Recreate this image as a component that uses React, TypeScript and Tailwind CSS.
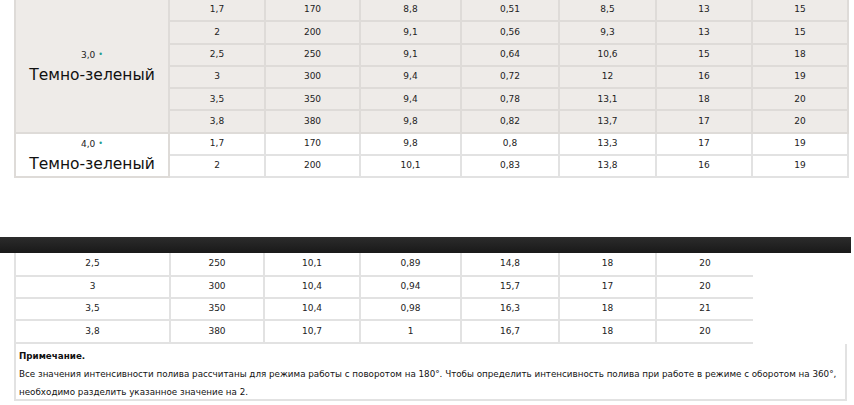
const font = { fontFamily: '"DejaVu Sans", Verdana, sans-serif' };

const topWidths = [154, 96, 95, 101, 98, 97, 96, 96];
const bottomWidths = [155, 94, 96, 101, 98, 97, 97];

const group30 = [
  ["1,7", "170", "8,8", "0,51", "8,5", "13", "15"],
  ["2", "200", "9,1", "0,56", "9,3", "13", "15"],
  ["2,5", "250", "9,1", "0,64", "10,6", "15", "18"],
  ["3", "300", "9,4", "0,72", "12", "16", "19"],
  ["3,5", "350", "9,4", "0,78", "13,1", "18", "20"],
  ["3,8", "380", "9,8", "0,82", "13,7", "17", "20"],
];

const group40 = [
  ["1,7", "170", "9,8", "0,8", "13,3", "17", "19"],
  ["2", "200", "10,1", "0,83", "13,8", "16", "19"],
];

const continued = [
  ["2,5", "250", "10,1", "0,89", "14,8", "18", "20"],
  ["3", "300", "10,4", "0,94", "15,7", "17", "20"],
  ["3,5", "350", "10,4", "0,98", "16,3", "18", "21"],
  ["3,8", "380", "10,7", "1", "16,7", "18", "20"],
];

function NameCell({ size, rows, bg }: { size: string; rows: number; bg: string }) {
  return (
    <td rowSpan={rows} className={`border-2 border-[#dedbd8] text-center align-middle ${bg}`}>
      <div className="text-[9px] leading-[18px] text-[#222]">
        {size} <span className="text-[#2a9d8f] text-[8px] align-top">•</span>
      </div>
      <div className="text-[15.5px] leading-[22px] text-[#111]">Темно-зеленый</div>
    </td>
  );
}

export default function App() {
  return (
    <div className="w-[854px] h-[405px] overflow-hidden bg-white" style={font}>
      {/* upper table, its first row is cut off by the window */}
      <div className="pl-[14px] pr-[7px] -mt-[2px]">
        <table className="border-collapse table-fixed w-[833px] text-[9px] text-[#222]">
          <colgroup>
            {topWidths.map((w, i) => (
              <col key={i} style={{ width: w }} />
            ))}
          </colgroup>
          <tbody>
            {group30.map((row, r) => (
              <tr key={r} className="h-[22.3px] bg-[#eeebe8]">
                {r === 0 && <NameCell size="3,0" rows={6} bg="bg-[#eeebe8]" />}
                {row.map((v, c) => (
                  <td key={c} className="border-2 border-[#dedbd8] text-center p-0">
                    {v}
                  </td>
                ))}
              </tr>
            ))}
            {group40.map((row, r) => (
              <tr key={r} className="h-[22.3px] bg-white">
                {r === 0 && <NameCell size="4,0" rows={2} bg="bg-white" />}
                {row.map((v, c) => (
                  <td key={c} className="border-2 border-[#e2e2e2] text-center p-0">
                    {v}
                  </td>
                ))}
              </tr>
            ))}
          </tbody>
        </table>
      </div>

      <div className="h-[59px]" />

      {/* page break bar */}
      <div className="h-[16px] w-[851px] bg-gradient-to-b from-[#2c2c2c] to-[#191919]" />

      {/* continued table */}
      <div className="pl-[14px]">
        <table className="border-collapse table-fixed w-[738px] text-[9px] text-[#222]">
          <colgroup>
            {bottomWidths.map((w, i) => (
              <col key={i} style={{ width: w }} />
            ))}
          </colgroup>
          <tbody>
            {continued.map((row, r) => (
              <tr key={r} className="h-[22.3px]">
                {row.map((v, c) => (
                  <td
                    key={c}
                    className={`border-2 border-[#e2e2e2] border-t-0 text-center p-0 ${c === 6 ? "border-r-0" : ""}`}
                  >
                    {v}
                  </td>
                ))}
              </tr>
            ))}
          </tbody>
        </table>
        <div className="w-[833px] h-[57px] border-2 border-t-0 border-[#e2e2e2] px-[3px] pt-[3px] text-[8.75px] leading-[18px] text-[#111]">
          <div className="font-bold">Примечание.</div>
          <div>
            Все значения интенсивности полива рассчитаны для режима работы с поворотом на 180°. Чтобы определить
            интенсивность полива при работе в режиме с оборотом на 360°, необходимо разделить указанное значение на 2.
          </div>
        </div>
      </div>
    </div>
  );
}
